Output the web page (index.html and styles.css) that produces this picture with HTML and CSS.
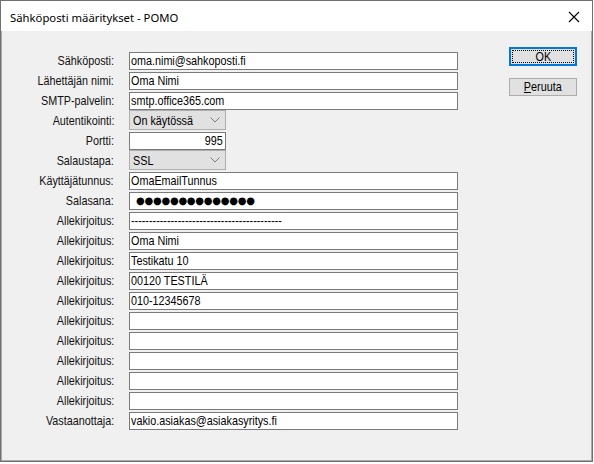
FILE: index.html
```html
<!DOCTYPE html>
<html lang="fi">
<head>
<meta charset="utf-8">
<title>Sähköposti määritykset - POMO</title>
<link rel="stylesheet" href="styles.css">
</head>
<body>
<div class="window">
  <div class="titlebar">
    <span class="title">Sähköposti määritykset - POMO</span>
    <svg class="close" width="12" height="12" viewBox="0 0 12 12"><path d="M1 1 L11 11 M11 1 L1 11" stroke="#000" stroke-width="1.1" fill="none"/></svg>
  </div>
  <div class="content">
    <div class="form">
      <label class="lbl"><span class="t">Sähköposti:</span></label><div class="field"><span class="t">oma.nimi@sahkoposti.fi</span></div>
      <label class="lbl"><span class="t">Lähettäjän nimi:</span></label><div class="field"><span class="t">Oma Nimi</span></div>
      <label class="lbl"><span class="t">SMTP-palvelin:</span></label><div class="field"><span class="t">smtp.office365.com</span></div>
      <label class="lbl"><span class="t">Autentikointi:</span></label><div class="combo"><span class="t">On käytössä</span><svg class="chev" width="10" height="6" viewBox="0 0 10 6"><path d="M0.5 0.5 L5 5 L9.5 0.5" stroke="#7a7a7a" stroke-width="1" fill="none"/></svg></div>
      <label class="lbl"><span class="t">Portti:</span></label><div class="field short right"><span class="t">995</span></div>
      <label class="lbl"><span class="t">Salaustapa:</span></label><div class="combo"><span class="t">SSL</span><svg class="chev" width="10" height="6" viewBox="0 0 10 6"><path d="M0.5 0.5 L5 5 L9.5 0.5" stroke="#7a7a7a" stroke-width="1" fill="none"/></svg></div>
      <label class="lbl"><span class="t">Käyttäjätunnus:</span></label><div class="field"><span class="t">OmaEmailTunnus</span></div>
      <label class="lbl"><span class="t">Salasana:</span></label><div class="field pwd">●●●●●●●●●●●●●●</div>
      <label class="lbl"><span class="t">Allekirjoitus:</span></label><div class="field"><span class="t">------------------------------------------</span></div>
      <label class="lbl"><span class="t">Allekirjoitus:</span></label><div class="field"><span class="t">Oma Nimi</span></div>
      <label class="lbl"><span class="t">Allekirjoitus:</span></label><div class="field"><span class="t">Testikatu 10</span></div>
      <label class="lbl"><span class="t">Allekirjoitus:</span></label><div class="field"><span class="t">00120 TESTILÄ</span></div>
      <label class="lbl"><span class="t">Allekirjoitus:</span></label><div class="field"><span class="t">010-12345678</span></div>
      <label class="lbl"><span class="t">Allekirjoitus:</span></label><div class="field"></div>
      <label class="lbl"><span class="t">Allekirjoitus:</span></label><div class="field"></div>
      <label class="lbl"><span class="t">Allekirjoitus:</span></label><div class="field"></div>
      <label class="lbl"><span class="t">Allekirjoitus:</span></label><div class="field"></div>
      <label class="lbl"><span class="t">Allekirjoitus:</span></label><div class="field"></div>
      <label class="lbl"><span class="t">Vastaanottaja:</span></label><div class="field"><span class="t">vakio.asiakas@asiakasyritys.fi</span></div>
    </div>
    <div class="buttons">
      <button class="btn default"><span class="focus"><span class="t mid">OK</span></span></button>
      <button class="btn"><span class="t mid"><u>P</u>eruuta</span></button>
    </div>
  </div>
</div>
</body>
</html>
```
FILE: styles.css
```css
html, body {
  margin: 0;
  padding: 0;
  background: #ffffff;
}
.window {
  width: 593px;
  height: 462px;
  box-sizing: border-box;
  border: 1px solid #707070;
  box-shadow: inset 1px 0 0 #a9a9a9, inset -1px 0 0 #a9a9a9, inset 0 -1px 0 #a9a9a9;
  background: #f0f0f0;
  display: flex;
  flex-direction: column;
  font-family: "Liberation Sans", Arial, sans-serif;
  font-size: 13px;
  color: #000;
}
.titlebar {
  height: 30px;
  background: #ffffff;
  display: flex;
  align-items: center;
  justify-content: space-between;
  padding: 0 12px 0 9px;
  flex-shrink: 0;
}
.title {
  font-family: "Noto Sans", "Open Sans", sans-serif;
  font-size: 11.3px;
  padding-top: 2px;
}
.close {
  display: block;
  margin-top: 2px;
}
.t {
  display: inline-block;
  transform: scaleX(0.83);
  transform-origin: left center;
  white-space: nowrap;
}
.lbl .t,
.right .t {
  transform-origin: right center;
}
.t.mid {
  transform-origin: center center;
}
.content {
  display: flex;
  align-items: flex-start;
  padding-top: 16px;
}
.form {
  display: grid;
  grid-template-columns: 113px 329px;
  grid-auto-rows: 18px;
  column-gap: 15px;
  row-gap: 2px;
  padding-top: 5px;
}
.lbl {
  text-align: right;
  line-height: 18px;
  white-space: nowrap;
  color: #111;
}
.field {
  box-sizing: border-box;
  height: 18px;
  background: #ffffff;
  border: 1px solid #7a7a7a;
  padding: 0 2px 0 1px;
  line-height: 16px;
  white-space: nowrap;
  overflow: hidden;
}
.field.short {
  width: 97px;
}
.field.right {
  text-align: right;
}
.field.pwd {
  font-family: "DejaVu Sans", sans-serif;
  font-size: 10px;
  letter-spacing: -0.25px;
  padding-left: 6px;
  line-height: 16px;
}
.combo {
  box-sizing: border-box;
  width: 97px;
  height: 20px;
  margin-top: -2px;
  background: #e1e1e1;
  border: 1px solid #adadad;
  display: flex;
  align-items: center;
  justify-content: space-between;
  padding: 0 5px 0 3px;
}
.chev {
  display: block;
}
.buttons {
  display: flex;
  flex-direction: column;
  gap: 12px;
  margin-left: 51px;
}
.btn {
  box-sizing: border-box;
  width: 68px;
  height: 18px;
  background: #e1e1e1;
  border: 1px solid #adadad;
  padding: 0;
  margin: 0;
  font-family: inherit;
  font-size: 13px;
  color: #000;
  display: flex;
  align-items: center;
  justify-content: center;
  line-height: 14px;
}
.btn.default {
  height: 19px;
  border: 2px solid #0078d7;
  padding: 1px;
}
.focus {
  box-sizing: border-box;
  width: 100%;
  height: 100%;
  border: 1px dotted #000;
  display: flex;
  align-items: center;
  justify-content: center;
}
```
